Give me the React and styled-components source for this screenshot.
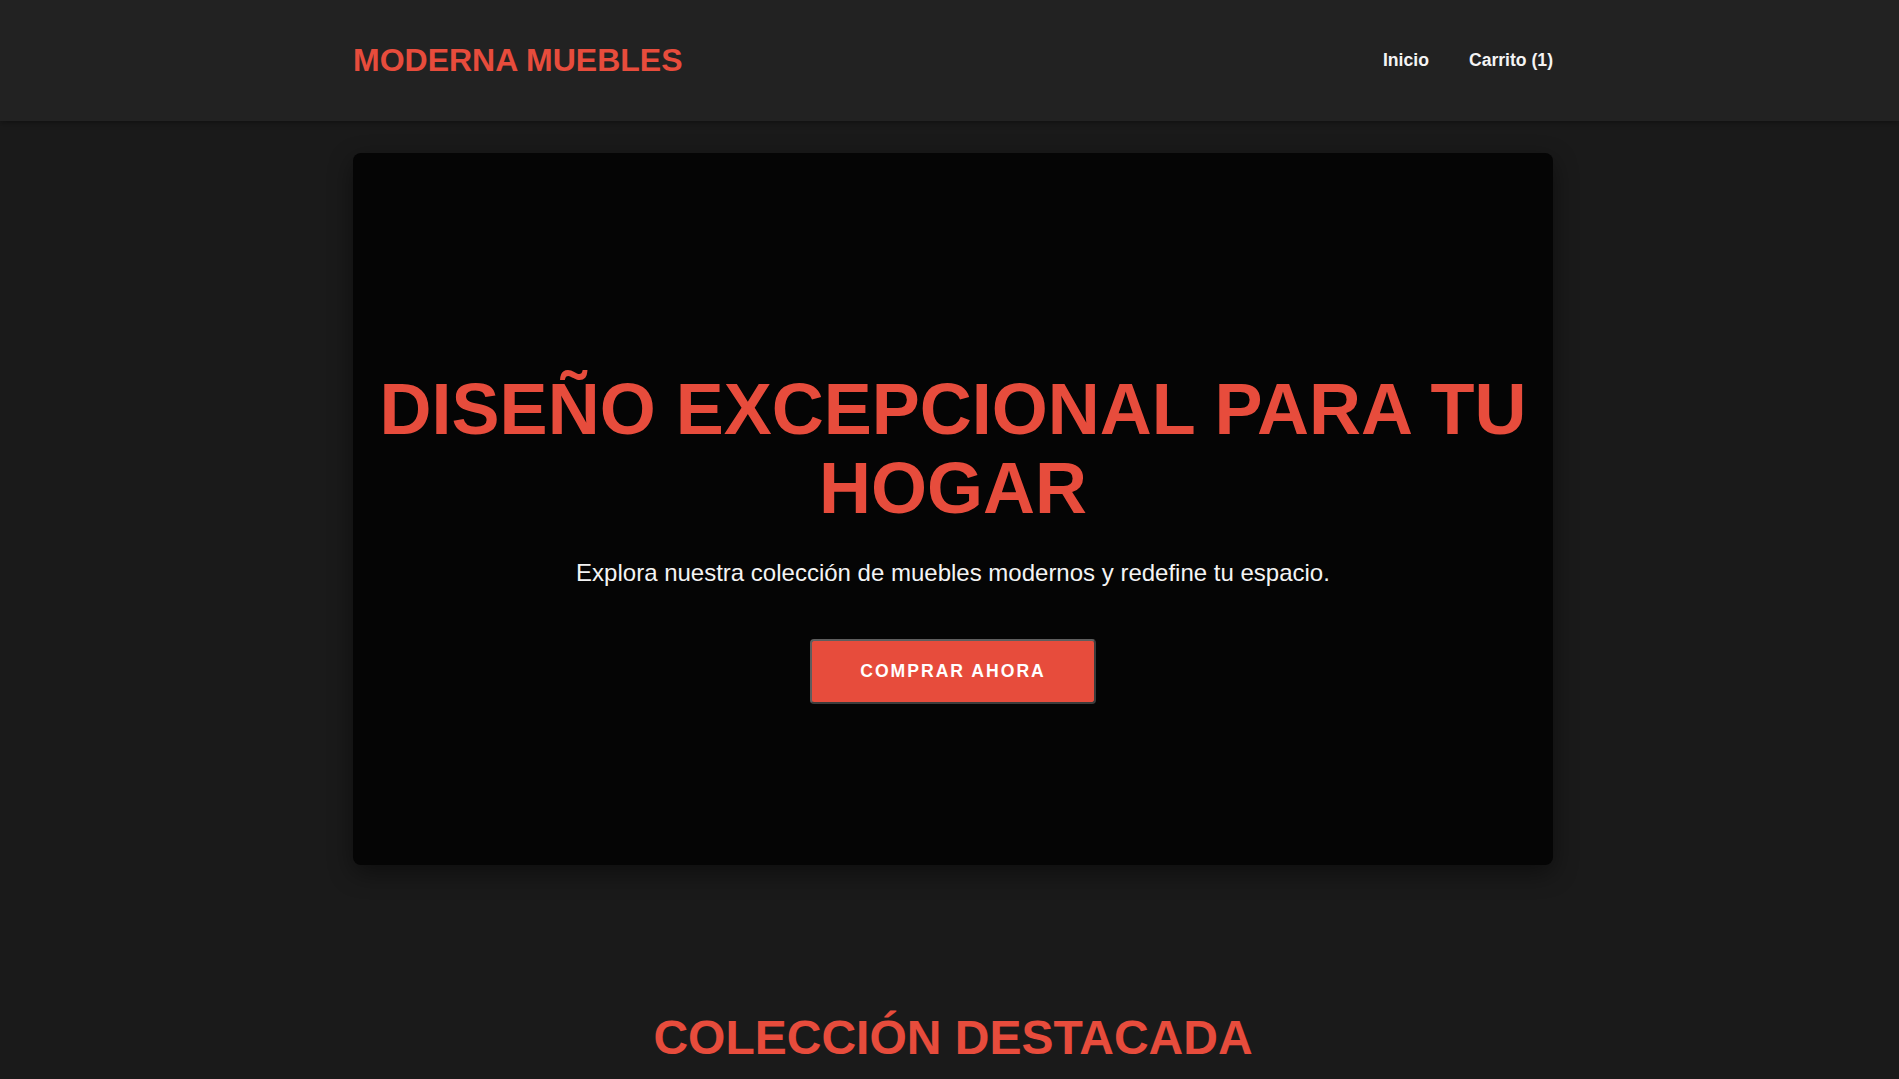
import React from 'react';
import styled, { createGlobalStyle } from 'styled-components';

const GlobalStyle = createGlobalStyle`
  * { box-sizing: border-box; }
  body {
    margin: 0;
    background-color: #1a1a1a;
    color: #f0f0f0;
    font-family: "Liberation Sans", Arial, sans-serif;
  }
`;

const Header = styled.header`
  background-color: #222222;
  height: 121px;
  box-shadow: 0 2px 6px rgba(0, 0, 0, 0.35);
  position: relative;
  z-index: 1;
`;

// slightly off-center like the original page
const Container = styled.div`
  max-width: 1207px;
  margin: 0 auto;
  padding-left: 7px;
`;

const HeaderInner = styled(Container)`
  height: 100%;
  display: flex;
  align-items: center;
  justify-content: space-between;
`;

const Logo = styled.h1`
  margin: 0;
  font-size: 32px;
  font-weight: 700;
  color: #e74c3c;
`;

const Nav = styled.nav`
  display: flex;
  gap: 40px;
`;

const NavLink = styled.a`
  color: #f4f4f4;
  font-size: 17.6px;
  font-weight: 700;
  text-decoration: none;
  cursor: pointer;
`;

const Hero = styled.section`
  height: 712px;
  margin-top: 32px;
  padding: 217px 20px 0;
  background-color: #050505;
  border-radius: 8px;
  box-shadow: 0 8px 24px rgba(0, 0, 0, 0.45);
  display: flex;
  flex-direction: column;
  align-items: center;
  text-align: center;
`;

const HeroTitle = styled.h2`
  margin: 0 0 31px;
  font-size: 72px;
  line-height: 1.1;
  font-weight: 700;
  color: #e74c3c;
`;

const HeroText = styled.p`
  margin: 0 0 52px;
  font-size: 24px;
  color: #f4f4f4;
`;

const Button = styled.button`
  background-color: #e74c3c;
  color: #ffffff;
  font-family: inherit;
  font-size: 17.6px;
  font-weight: 700;
  letter-spacing: 2px;
  padding: 20px 48px 20px 48px;
  border: 2px solid;
  border-color: #5e5e5e #3c3c3c #3c3c3c #5e5e5e;
  border-radius: 4px;
  cursor: pointer;
`;

const Featured = styled.section`
  padding: 145px 0 60px;
  text-align: center;
`;

const SectionTitle = styled.h2`
  margin: 0;
  font-size: 48px;
  font-weight: 700;
  color: #e74c3c;
`;

export default function App() {
  return (
    <>
      <GlobalStyle />
      <Header>
        <HeaderInner>
          <Logo>MODERNA MUEBLES</Logo>
          <Nav>
            <NavLink>Inicio</NavLink>
            <NavLink>Carrito (1)</NavLink>
          </Nav>
        </HeaderInner>
      </Header>
      <Container>
        <Hero>
          <HeroTitle>DISEÑO EXCEPCIONAL PARA TU HOGAR</HeroTitle>
          <HeroText>Explora nuestra colección de muebles modernos y redefine tu espacio.</HeroText>
          <Button>COMPRAR AHORA</Button>
        </Hero>
      </Container>
      <Featured>
        <Container>
          <SectionTitle>COLECCIÓN DESTACADA</SectionTitle>
        </Container>
      </Featured>
    </>
  );
}
